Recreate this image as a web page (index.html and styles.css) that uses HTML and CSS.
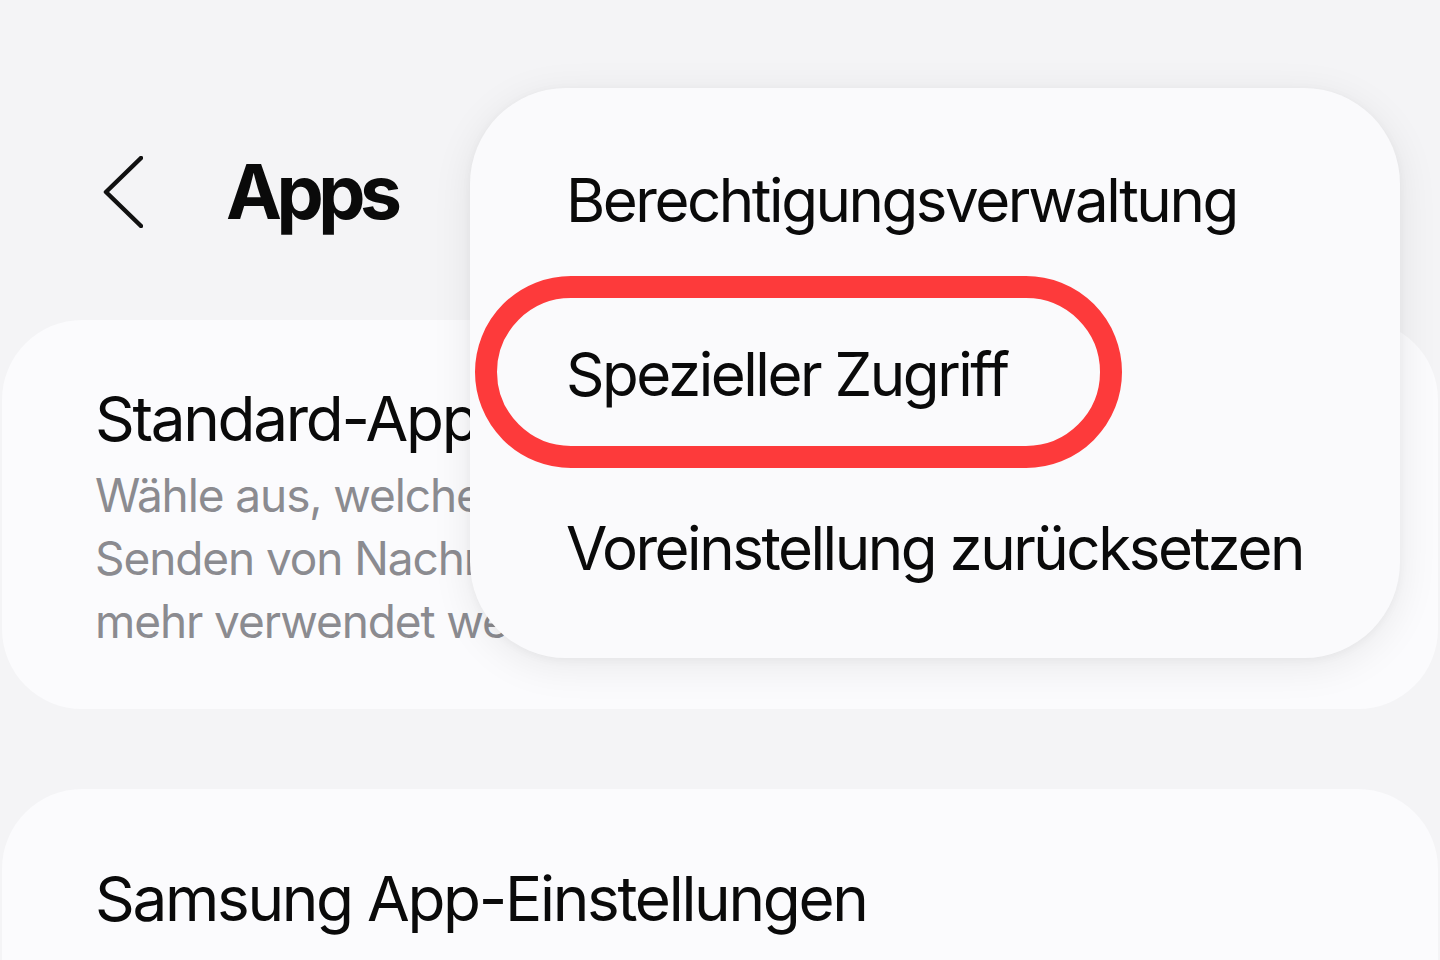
FILE: index.html
```html
<!DOCTYPE html>
<html lang="de">
<head>
  <meta charset="UTF-8" />
  <title>Apps</title>
  <link rel="stylesheet" href="styles.css">
</head>
<body>
  <header class="topbar">
    <button class="back" aria-label="Zurück">
      <svg viewBox="0 0 40 72" width="40" height="72">
        <path d="M38 2 L3 36 L38 70"/>
      </svg>
    </button>
    <h1>Apps</h1>
  </header>

  <section class="card">
    <div class="item-title">Standard-Apps</div>
    <div class="item-sub">Wähle aus, welche Apps für Anrufe, das<br>Senden von Nachrichten, das Surfen und<br>mehr verwendet werden.</div>
  </section>

  <section class="card card-last">
    <div class="item-title">Samsung App-Einstellungen</div>
  </section>

  <!-- overflow menu -->
  <ul class="menu">
    <li>Berechtigungsverwaltung</li>
    <li class="marked">Spezieller Zugriff</li>
    <li>Voreinstellung zurücksetzen</li>
  </ul>
</body>
</html>
```

FILE: styles.css
```css
:root {
  --bg:     #f4f4f6;
  --card:   #fbfbfd;
  --menu:   #fafafc;
  --text:   #0a0a0a;
  --sub:    #8b8b90;
  --red:    #fd3a3b;
}
*, *::before, *::after { box-sizing: border-box; margin: 0; padding: 0; }
html, body { height: 100%; overflow: hidden; }
body {
  position: relative;
  background: var(--bg);
  font-family: 'Inter', 'Noto Sans', sans-serif;
  color: var(--text);
}

/* header */
.topbar {
  display: flex;
  align-items: center;
  gap: 83px;
  height: 72px;
  margin: 156px 0 0 103px;
}
.back {
  display: flex;
  border: none;
  background: none;
}
.back path {
  fill: none;
  stroke: #111;
  stroke-width: 4.5;
  stroke-linecap: round;
  stroke-linejoin: round;
}
h1 {
  font-size: 75px;
  font-weight: 700;
  line-height: 72px;
  letter-spacing: -5.5px;
}

/* list cards */
.card {
  margin: 92px 2px 0;
  padding: 62px 93px 56px;
  background: var(--card);
  border-radius: 80px;
}
.card-last {
  margin-top: 80px;
  padding-top: 73px;
  height: 400px;
}
.item-title {
  font-size: 62px;
  line-height: 74px;
  letter-spacing: -2.3px;
}
.item-sub {
  margin-top: 8px;
  font-size: 46px;
  line-height: 63px;
  letter-spacing: -1.1px;
  color: var(--sub);
}

/* popup menu */
.menu {
  position: absolute;
  left: 470px;
  top: 88px;
  width: 930px;
  height: 570px;
  padding: 25px 0 23px;
  list-style: none;
  background: var(--menu);
  border-radius: 96px;
  box-shadow: 0 8px 40px rgba(0,0,0,0.08), 0 2px 10px rgba(0,0,0,0.04);
}
.menu li {
  position: relative;
  display: flex;
  align-items: center;
  height: 174px;
  padding-left: 96px;
  font-size: 60px;
  letter-spacing: -2.45px;
}
.menu li.marked::after {
  content: '';
  position: absolute;
  left: 5px;
  top: -11px;
  width: 647px;
  height: 192px;
  border: 22px solid var(--red);
  border-radius: 96px;
}
```
